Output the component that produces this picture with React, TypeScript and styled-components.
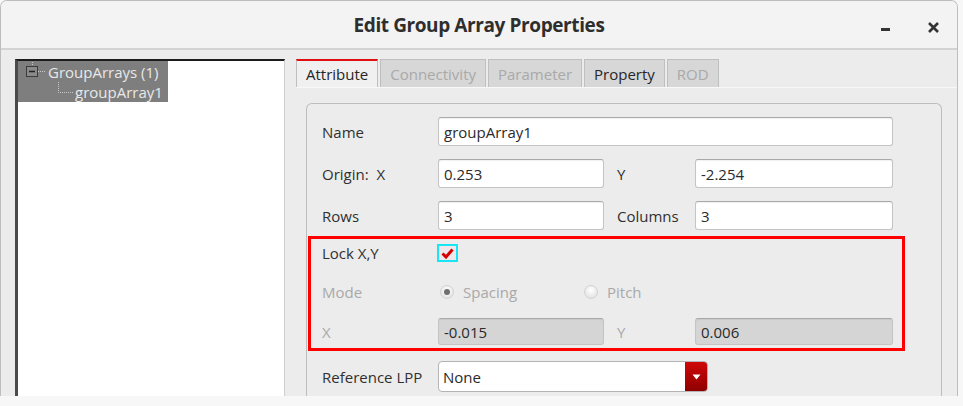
import React from 'react';
import styled, { createGlobalStyle } from 'styled-components';

const Global = createGlobalStyle`
  html, body { margin: 0; padding: 0; background: #f7f7f7; }
  body { font-family: "Open Sans", "Noto Sans", sans-serif; color: #2f2f2f; }
  #root { width: 963px; height: 406px; overflow: hidden; }
`;

const Window = styled.div`
  width: 958px;
  height: 396px;
  box-sizing: border-box;
  border: 1px solid #bdbdbd;
  border-bottom: none;
  border-radius: 7px 7px 0 0;
  background: #ececec;
  display: flex;
  flex-direction: column;
  overflow: hidden;
`;

const TitleBar = styled.div`
  height: 47px;
  flex: none;
  display: grid;
  grid-template-columns: 1fr auto 1fr;
  align-items: center;
  background: #f3f3f3;
  border-bottom: 2px solid #d3d3d3;
`;

const Title = styled.div`
  grid-column: 2;
  font-size: 19px;
  font-weight: 700;
  color: #2e2e2e;
  letter-spacing: -0.4px;
  padding-top: 1px;
`;

const Controls = styled.div`
  grid-column: 3;
  justify-self: end;
  display: flex;
  align-items: center;
  gap: 37px;
  padding-right: 17px;
`;

const MinButton = styled.span`
  display: block;
  width: 9px;
  height: 3px;
  margin-top: 9px;
  background: #333;
`;

const CloseButton = styled.span`
  display: block;
  width: 13px;
  height: 13px;
  margin-top: -2px;
`;

const Body = styled.div`
  flex: 1;
  display: flex;
  padding: 9px 0 0 14px;
  min-height: 0;
`;

const TreePanel = styled.div`
  width: 270px;
  flex: none;
  box-sizing: border-box;
  background: #ffffff;
  border-top: 2px solid #1c1c1c;
  border-left: 3px solid #4a4a4a;
  border-right: 1px solid #cfcfcf;
`;

const TreeSelection = styled.div`
  width: 150px;
  height: 41px;
  background: #7e7e7e;
  position: relative;
  color: #e8e8e8;
  font-size: 15px;
`;

const TreeRow = styled.div<{ $indent: number; $top: number }>`
  position: absolute;
  left: ${p => p.$indent}px;
  top: ${p => p.$top}px;
  line-height: 20px;
  white-space: nowrap;
`;

const TreeLines = styled.svg`
  position: absolute;
  left: 0;
  top: 0;
`;

const RightArea = styled.div`
  flex: 1;
  margin-left: 11px;
  display: flex;
  flex-direction: column;
  min-width: 0;
`;

const TabBar = styled.div`
  height: 28px;
  flex: none;
  display: flex;
  align-items: stretch;
  gap: 2px;
  border-bottom: 1px solid #f8f8f8;
`;

const Tab = styled.div<{ $active?: boolean; $disabled?: boolean }>`
  box-sizing: border-box;
  padding: 0 9px;
  display: flex;
  align-items: center;
  font-size: 15px;
  border: 1px solid #bfbfbf;
  border-bottom: none;
  border-top: ${p => (p.$active ? '2px solid #e01010' : '1px solid #bfbfbf')};
  background: ${p => (p.$active ? '#f0f0f0' : '#d7d7d7')};
  color: ${p => (p.$disabled ? '#a9a9a9' : '#262626')};
  padding-top: ${p => (p.$active ? '0' : '1px')};
`;

const Pane = styled.div`
  flex: 1;
  padding: 15px 15px 0 10px;
  display: flex;
  min-height: 0;
`;

const GroupBox = styled.div`
  flex: 1;
  box-sizing: border-box;
  border: 1px solid #bdbdbd;
  border-bottom: none;
  border-radius: 6px 6px 0 0;
  padding-top: 13px;
  display: flex;
  flex-direction: column;
`;

const Row = styled.div<{ $mt?: number; $h?: number; $pl?: number }>`
  display: grid;
  grid-template-columns: 116px 166px 91px 198px;
  align-items: center;
  height: ${p => p.$h ?? 29}px;
  margin-top: ${p => p.$mt ?? 0}px;
  padding-left: ${p => p.$pl ?? 15}px;
`;

const Label = styled.span<{ $disabled?: boolean; $inset?: boolean }>`
  font-size: 15px;
  color: ${p => (p.$disabled ? '#a9a9a9' : '#303030')};
  padding-left: ${p => (p.$inset ? 13 : 0)}px;
  white-space: pre;
`;

const Field = styled.div<{ $disabled?: boolean; $span?: number }>`
  grid-column: ${p => (p.$span ? `span ${p.$span}` : 'auto')};
  box-sizing: border-box;
  height: 100%;
  display: flex;
  align-items: center;
  padding-left: 5px;
  font-size: 15px;
  color: #2a2a2a;
  background: ${p => (p.$disabled ? '#d5d5d5' : '#ffffff')};
  border: 1px solid #c4c4c4;
  border-top-color: #a9a9a9;
  border-radius: 3px;
  box-shadow: inset 0 1px 1px rgba(0, 0, 0, 0.06);
`;

const HighlightBox = styled.div`
  width: 597px;
  box-sizing: border-box;
  margin: 6px 0 0 1px;
  border: 3px solid #ff0000;
  padding: 0 0 3px 0;
  display: flex;
  flex-direction: column;
`;

const CheckBox = styled.span`
  width: 21px;
  height: 18px;
  margin-left: -1px;
  box-sizing: border-box;
  border: 2px solid #19e6f5;
  background: #f1e7ea;
  display: flex;
  align-items: center;
  justify-content: center;
`;

const RadioGroup = styled.div`
  grid-column: span 3;
  display: flex;
  padding-left: 2px;
`;

const RadioItem = styled.label`
  width: 144px;
  display: flex;
  align-items: center;
  gap: 9px;
  font-size: 15px;
  color: #a9a9a9;
`;

const RadioDot = styled.span<{ $checked?: boolean }>`
  width: 14px;
  height: 14px;
  box-sizing: border-box;
  border-radius: 50%;
  border: 1px solid #d2d2d2;
  background: radial-gradient(circle at 50% 35%, #ffffff, #dcdcdc);
  display: flex;
  align-items: center;
  justify-content: center;
  &::after {
    content: '';
    width: 6px;
    height: 6px;
    border-radius: 50%;
    background: ${p => (p.$checked ? '#6f6f6f' : 'transparent')};
  }
`;

const Select = styled.div`
  grid-column: span 2;
  width: 270px;
  height: 100%;
  box-sizing: border-box;
  display: flex;
  border: 1px solid #b4b4b4;
  border-radius: 4px;
  background: #ffffff;
  overflow: hidden;
`;

const SelectValue = styled.span`
  flex: 1;
  display: flex;
  align-items: center;
  padding-left: 4px;
  font-size: 15px;
  color: #2a2a2a;
`;

const SelectButton = styled.span`
  width: 22px;
  background: linear-gradient(#d00808, #8e0000);
  display: flex;
  align-items: center;
  justify-content: center;
`;

const BottomStrip = styled.div`
  height: 10px;
`;

export default function App() {
  return (
    <>
      <Global />
      <Window>
        <TitleBar>
          <Title>Edit Group Array Properties</Title>
          <Controls>
            <MinButton />
            <CloseButton>
              <svg width="13" height="13" viewBox="0 0 13 13">
                <path d="M2 2 L11 11 M11 2 L2 11" stroke="#333" strokeWidth="2.6" />
              </svg>
            </CloseButton>
          </Controls>
        </TitleBar>
        <Body>
          <TreePanel>
            <TreeSelection>
              <TreeLines width="150" height="41">
                <path d="M14.5 1 V5" stroke="#c8c8c8" strokeDasharray="1 1" fill="none" />
                <rect x="8.5" y="5.5" width="11" height="10" fill="#8a8a8a" stroke="#3a3a3a" />
                <path d="M11 10.5 H17" stroke="#222" strokeWidth="1.5" fill="none" />
                <path d="M20 10.5 H27" stroke="#c8c8c8" strokeDasharray="1 1" fill="none" />
                <path d="M40.5 21 V31.5 H56" stroke="#c8c8c8" strokeDasharray="1 1" fill="none" />
              </TreeLines>
              <TreeRow $indent={30} $top={1}>GroupArrays (1)</TreeRow>
              <TreeRow $indent={57} $top={21}>groupArray1</TreeRow>
            </TreeSelection>
          </TreePanel>
          <RightArea>
            <TabBar>
              <Tab $active>Attribute</Tab>
              <Tab $disabled>Connectivity</Tab>
              <Tab $disabled>Parameter</Tab>
              <Tab>Property</Tab>
              <Tab $disabled>ROD</Tab>
            </TabBar>
            <Pane>
              <GroupBox>
                <Row>
                  <Label>Name</Label>
                  <Field $span={3}>groupArray1</Field>
                </Row>
                <Row $mt={13}>
                  <Label>{'Origin:  X'}</Label>
                  <Field>0.253</Field>
                  <Label $inset>Y</Label>
                  <Field>-2.254</Field>
                </Row>
                <Row $mt={13}>
                  <Label>Rows</Label>
                  <Field>3</Field>
                  <Label $inset>Columns</Label>
                  <Field>3</Field>
                </Row>
                <HighlightBox>
                  <Row $h={28} $pl={11}>
                    <Label>Lock X,Y</Label>
                    <CheckBox>
                      <svg width="13" height="11" viewBox="0 0 13 11">
                        <path d="M1.5 5.5 L5 9 L11.5 1.5" stroke="#d40000" strokeWidth="3" fill="none" />
                      </svg>
                    </CheckBox>
                  </Row>
                  <Row $h={28} $mt={11} $pl={11}>
                    <Label $disabled>Mode</Label>
                    <RadioGroup>
                      <RadioItem>
                        <RadioDot $checked />
                        Spacing
                      </RadioItem>
                      <RadioItem>
                        <RadioDot />
                        Pitch
                      </RadioItem>
                    </RadioGroup>
                  </Row>
                  <Row $h={27} $mt={12} $pl={11}>
                    <Label $disabled>X</Label>
                    <Field $disabled>-0.015</Field>
                    <Label $inset $disabled>Y</Label>
                    <Field $disabled>0.006</Field>
                  </Row>
                </HighlightBox>
                <Row $h={31} $mt={10}>
                  <Label>Reference LPP</Label>
                  <Select>
                    <SelectValue>None</SelectValue>
                    <SelectButton>
                      <svg width="9" height="6" viewBox="0 0 9 6">
                        <path d="M0.5 0.5 H8.5 L4.5 5.5 Z" fill="#ffffff" />
                      </svg>
                    </SelectButton>
                  </Select>
                </Row>
              </GroupBox>
            </Pane>
          </RightArea>
        </Body>
      </Window>
      <BottomStrip />
    </>
  );
}
